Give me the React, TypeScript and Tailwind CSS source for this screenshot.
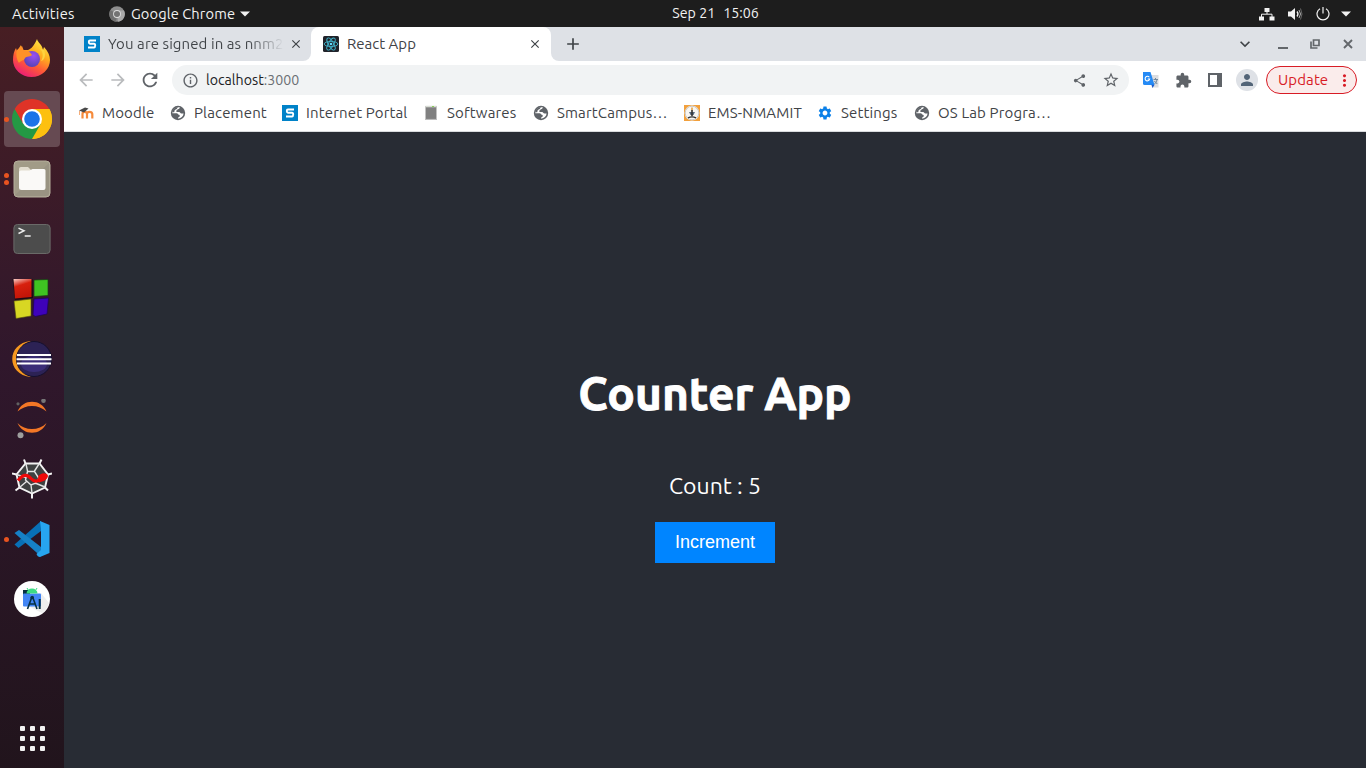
import React from "react";
import { MdArrowBack, MdArrowForward, MdRefresh, MdInfoOutline, MdShare, MdStarBorder, MdExtension, MdSettings, MdPerson, MdClose, MdAdd, MdExpandMore, MdMoreVert } from "react-icons/md";

const S = ({ vb = "0 0 40 40", w = 40, h = 40, children }: { vb?: string; w?: number; h?: number; children: React.ReactNode }) => (
  <svg viewBox={vb} width={w} height={h} className="block shrink-0">{children}</svg>
);

const Firefox = () => (
  <S>
    <defs>
      <linearGradient id="fx" x1="0.8" y1="0" x2="0.25" y2="1">
        <stop offset="0" stopColor="#fff04a" /><stop offset="0.35" stopColor="#ffae1f" /><stop offset="0.65" stopColor="#ff5a36" /><stop offset="1" stopColor="#e8177d" />
      </linearGradient>
      <radialGradient id="fxp" cx="0.6" cy="0.3" r="0.7"><stop offset="0" stopColor="#9a50f5" /><stop offset="1" stopColor="#5843b5" /></radialGradient>
    </defs>
    <path d="M25 0c1 4 5 5 6 11l1-3c4 4 6 9 6 13a18.500 17 0 0 1-37 0c0-5 1-9 3-12l1 3 4-6 1 5 6 0c3-1 6-4 9-11z" fill="url(#fx)" />
    <circle cx="20" cy="20" r="8" fill="url(#fxp)" />
    <path d="M5 11l5-4 2 5c4-1 6 1 8 4-1 2-6 1-7 3-1 3-4 2-6 5-3-5-3-9-2-13z" fill="#ff9128" />
    <path d="M27 9c4 3 5 8 2 13 4-1 5-7 3-11z" fill="#ffd33e" />
  </S>
);
const Chrome = () => (
  <S>
    <path d="M20 20L2.700 10A20 20 0 0 1 37.300 10z" fill="#df3327" />
    <path d="M20 20L37.300 10A20 20 0 0 1 20 40z" fill="#fdc00f" />
    <path d="M20 20L20 40A20 20 0 0 1 2.700 10z" fill="#249944" />
    <path d="M2.700 10L11.300 25 20 20 20 10zM20 10h17.300L20 24z" fill="#df3327" />
    <path d="M37.300 10A20 20 0 0 1 20 40l8.700-15L20 10z" fill="#fdc00f" />
    <path d="M20 40l8.700-15L20 20l-8.700 5z" fill="#249944" />
    <circle cx="20" cy="20" r="10" fill="#fff" /><circle cx="20" cy="20" r="7.800" fill="#1b73e8" />
  </S>
);
const Files = () => (
  <S>
    <rect x="2" y="2" width="36" height="36" rx="4" fill="#a19b87" stroke="#b5af9c" />
    <path d="M3 36L37 4v30a3 3 0 0 1-3 3H5z" fill="#969080" opacity=".7" />
    <path d="M7 10a2 2 0 0 1 2-2h7l3 3v7H7z" fill="#e2ddcf" />
    <path d="M7 13.500q0-2 2-2h8.500l3-1.500h11.500q1.500 0 1.500 1.500v17.500q0 2-2 2h-22q-2.500 0-2.500-2z" fill="#faf9f7" />
  </S>
);
const Terminal = () => (
  <S>
    <rect x="1.900" y="5.500" width="36.200" height="29" rx="3.500" fill="#4c4c4c" stroke="#6a6a68" />
    <path d="M6.500 9.100l5.500 2.700-5.500 2.700M12.700 17.100h6" fill="none" stroke="#eee" strokeWidth="1.500" />
  </S>
);
const Blocks = () => (
  <S>
    <defs><linearGradient id="cb" x1="0" y1="0" x2=".3" y2="1"><stop offset="0" stopColor="#f8d1cb" /><stop offset=".4" stopColor="#d7200e" /><stop offset="1" stopColor="#c31508" /></linearGradient></defs>
    <path d="M.5 0l20 0 .5 19-18 2z" fill="#1c0b12" />
    <path d="M1.500 0h18v18L3 19.500z" fill="url(#cb)" />
    <path d="M22 1l14-.5v16l-14 1z" fill="#3fc222" stroke="#163f14" strokeWidth=".7" />
    <path d="M2 22l17-2v17L4 39.500z" fill="#d8d723" stroke="#55520d" strokeWidth=".6" />
    <path d="M22 20l14.500-1L35 35l-12 2.500-2-2z" fill="#3e02ba" stroke="#1c0359" strokeWidth=".7" />
  </S>
);
const Eclipse = () => (
  <S>
    <path d="M19 2C-6 4-6 36 19 38L8 28V12z" fill="#f79820" />
    <circle cx="22" cy="20" r="17.500" fill="#2c2255" stroke="#15102d" />
    <ellipse cx="22" cy="25" rx="13" ry="8" fill="#3f3181" opacity=".8" />
    <path d="M5 16h34M4.500 20.200h35M5 24.500h34" stroke="#fff" strokeWidth="2.100" />
  </S>
);
const Jupyter = () => (
  <S>
    <path d="M5.500 12.500C11-.5 29-.5 34.500 12.500 27 5 13 5 5.500 12.500zM5.500 24C11 37 29 37 34.500 24 27 32 13 32 5.500 24z" fill="#f37726" />
    <circle cx="31.500" cy="1.800" r="2.300" fill="#767677" /><circle cx="6" cy="4.800" r="1.600" fill="#616262" /><circle cx="8.500" cy="36.300" r="3" fill="#9e9e9e" />
  </S>
);
const Spyder = () => (
  <S>
    <path d="M13.500 4.500h14l8.500 11-3 13-13 6-12.500-6-3-13z" fill="#3e4141" stroke="#f2f2f2" strokeWidth="1.900" />
    <path d="M13.500 4.500L12 .5M27.500 4.500L29.500.5M36 15.500l4-1M33 28.500l3 3M20 34v5.500M7.500 28.500l-4 3M4.500 15.500L0 14.500" stroke="#f2f2f2" strokeWidth="2" />
    <path d="M14 5l1.500 7M27 5l-4.500 7M36 15.500l-9 4M33 28l-10-4M20 34l-1-8M7.500 28.500l7-6M4.500 15.500l9 3M15.500 12.500h7l4.500 7-4 5-4 1.500-5.500-5z" fill="none" stroke="#e4e4e4" strokeWidth="1.400" />
    <path d="M6 21.500c5-6 9-7 13-2 4 4.500 8 3 11-2" fill="none" stroke="#f00909" strokeWidth="3.200" />
    <path d="M26 18c2-4 8-5 10-1.500 0 4-5 6-9 7z" fill="#f00909" />
  </S>
);
const Code = () => (
  <S>
    <path d="M2.500 25.500l4 3.500L29 12V2z" fill="#0870b6" />
    <path d="M2.500 14L7 11l22 17v9.500z" fill="#1681c6" />
    <path d="M28 2l9.500 4v28L28 38q-2.500 0-3.500-3l4.500-4V10z" fill="#27a5ef" />
  </S>
);
const Studio = () => (
  <S>
    <circle cx="20" cy="20" r="18" fill="#fff" />
    <path d="M29 14l8 10a18 18 0 0 1-7 10l-12-6z" fill="#eee" />
    <path d="M11 11h7v6h-7z" fill="#073042" /><rect x="11" y="14.500" width="18" height="13" rx="1" fill="#4285f4" />
    <path d="M14.500 14.500a5.500 5 0 0 1 11 0z" fill="#3ddc84" /><path d="M15 9l1.500 2.500M25 9l-1.500 2.500" stroke="#3ddc84" />
    <path d="M15.500 30l4-11h1.500l4 11M17.500 25h5" stroke="#073042" strokeWidth="1.600" fill="none" /><path d="M27.700 20v10" stroke="#073042" strokeWidth="2" />
    <circle cx="20.200" cy="18.500" r="1.800" fill="#073042" />
  </S>
);
const Portal = () => (
  <S vb="0 0 16 16" w={16} h={16}>
    <rect width="16" height="16" fill="#0082c8" />
    <path d="M12 4.500H6Q4.800 4.500 4.800 6T6 7.800h4q1.200 0 1.200 1.800T10 11.500H4" fill="none" stroke="#fff" strokeWidth="1.900" />
  </S>
);
const ReactLogo = () => (
  <S vb="0 0 16 16" w={16} h={16}>
    <rect width="16" height="16" rx="1.500" fill="#20232a" />
    <g fill="none" stroke="#42b3ca" strokeWidth=".9">
      <ellipse cx="8" cy="8" rx="6.800" ry="2.600" /><ellipse cx="8" cy="8" rx="6.800" ry="2.600" transform="rotate(60 8 8)" /><ellipse cx="8" cy="8" rx="6.800" ry="2.600" transform="rotate(120 8 8)" />
    </g><circle cx="8" cy="8" r="1.300" fill="#61dafb" />
  </S>
);
const Globe = () => (
  <S vb="0 0 16 16" w={16} h={16}>
    <circle cx="8" cy="8" r="7.200" fill="#5f6368" />
    <path d="M9.800 2.300c0 1.300-.7 1.700-2 1.900-.6.200-.5 1.100-1.300 1.300-.7.200-.3 1.500.6 1.500h2c1 0 1.200 1.600 2.300 1.600h2.200c-.3 2.700-2.400 4.900-5.400 5.100 0-1.400.2-1.600 1.200-2 .9-.4.3-1.700-.4-1.900-1.200-.2-1-1.500-2.300-1.500H2.300C2.300 4.800 5.500 1.600 9.800 2.300z" fill="#fff" />
    <path d="M2.200 7.200C2.300 4.500 5 2.200 7.800 2.200L6.800 4 4.800 5l-.6 2.200z" fill="#5f6368" />
  </S>
);
const Moodle = () => (
  <S vb="0 0 16 16" w={16} h={16}>
    <path d="M4.500 13.500V9q0-2.200 2.200-2.200T9 9v4.500M9 9q0-2.200 2.500-2.200T14.300 9v4.500" fill="none" stroke="#f68b3c" strokeWidth="2.200" />
    <path d="M1 5.500l6-3 3.500 1-4.500 4z" fill="#494949" /><path d="M1.500 6v4" stroke="#f6ad78" />
  </S>
);
const Server = () => (
  <S vb="0 0 16 16" w={16} h={16}>
    <rect x="2.500" y="1" width="11" height="14" fill="#858585" /><path d="M2.500 1.500h11" stroke="#d8dcd5" strokeWidth="1.500" /><path d="M9 1.500h2" stroke="#8ad05a" />
    <path d="M3 4h10M3 6h10M3 8h10M3 10h10M3 12h10" stroke="#757575" strokeWidth=".6" /><path d="M2.500 14.500h11" stroke="#bbb" />
  </S>
);
const Ems = () => (
  <S vb="0 0 16 16" w={16} h={16}>
    <rect width="16" height="16" fill="#f2a03c" /><circle cx="8" cy="8" r="7.400" fill="#f8f6f2" /><circle cx="8" cy="8" r="6.800" fill="none" stroke="#b5b3b0" strokeWidth=".7" />
    <path d="M8 2.500v3" stroke="#e39a35" strokeWidth="1.500" /><path d="M5 7h6l-1.500 3h-3z" fill="#596b80" /><path d="M7.200 5h1.600v6H7.200z" fill="#333" /><path d="M4 12.800q4-2 8 0" fill="none" stroke="#333" strokeWidth="1.300" />
  </S>
);
const Translate = () => (
  <S vb="0 0 16 16" w={16} h={16}>
    <path d="M6 3h9.500v12.500H9z" fill="#dcdde0" /><path d="M0 0h7.500l4 13H1.500Q0 13 0 11.500z" fill="#258af5" /><path d="M8.500 12.800h3L9.500 16z" fill="#1b59c9" />
    <path d="M6.300 5.200a2.300 2.300 0 1 0 .4 1.800H4.700" fill="none" stroke="#fff" strokeWidth="1.100" /><path d="M10.500 7.500H15M12.500 6v1.500M14 8q-1 3-2.500 4M11.300 9l3 3" stroke="#70889e" fill="none" />
  </S>
);

const apps = [
  { id: "firefox", icon: <Firefox />, dots: 0 },
  { id: "chrome", icon: <Chrome />, dots: 1 },
  { id: "files", icon: <Files />, dots: 2 },
  { id: "terminal", icon: <Terminal />, dots: 0 },
  { id: "blocks", icon: <Blocks />, dots: 0 },
  { id: "eclipse", icon: <Eclipse />, dots: 0 },
  { id: "jupyter", icon: <Jupyter />, dots: 0 },
  { id: "spyder", icon: <Spyder />, dots: 0 },
  { id: "code", icon: <Code />, dots: 1 },
  { id: "studio", icon: <Studio />, dots: 0 },
];

const bookmarks = [
  { text: "Moodle", icon: <Moodle />, w: "w-[92px]" },
  { text: "Placement", icon: <Globe />, w: "w-[112px]" },
  { text: "Internet Portal", icon: <Portal />, w: "w-[141px]" },
  { text: "Softwares", icon: <Server />, w: "w-[110px]" },
  { text: "SmartCampus…", icon: <Globe />, w: "w-[151px]" },
  { text: "EMS-NMAMIT", icon: <Ems />, w: "w-[133px]" },
  { text: "Settings", icon: <MdSettings size={16} color="#0b80e8" />, w: "w-[97px]" },
  { text: "OS Lab Progra…", icon: <Globe />, w: "w-[140px]" },
];

const TopBar = () => (
  <header className="grid h-[27px] shrink-0 grid-cols-[1fr_auto_1fr] items-center bg-[#1d1d1d] text-[14.670px] leading-[27px] text-[#f2f2f2]">
    <div className="flex items-center pl-3">
      <span className="w-[97px] tracking-[0.25px]">Activities</span>
      <S vb="0 0 16 16" w={16} h={16}>
        <circle cx="8" cy="8" r="7.800" fill="#8d8d8d" /><path d="M8 8L1.500 4A7.800 7.800 0 0 0 7 15.800z" fill="#707070" /><path d="M8 4.500h7A7.800 7.800 0 0 1 9 15.800z" fill="#aaa" />
        <circle cx="8" cy="8" r="3.900" fill="#ddd" /><circle cx="8" cy="8" r="3" fill="#737373" />
      </S>
      <span className="ml-[6px] w-[109px] tracking-[0.1px]">Google Chrome</span>
      <S vb="0 0 10 6" w={10} h={6}><path d="M0 .5h10L5 5.500z" fill="#f2f2f2" /></S>
    </div>
    <div className="ml-[65px] flex gap-2 text-[14.200px]"><span>Sep 21</span><span>15:06</span></div>
    <div className="flex items-center justify-end pr-[15px]">
      <S vb="0 0 16 14" w={16} h={14}><path d="M5.500 1h5v4h-5zM0 9.500h5v4H0zM10.500 9.500h5v4h-5z" fill="#f2f2f2" /><path d="M8 4v3M2.500 10V7.200h10.500V10" fill="none" stroke="#f2f2f2" /></S>
      <span className="w-[13px]" />
      <S vb="0 0 16 14" w={16} h={14}><path d="M0 4.500h3L7 1v12L3 9.500H0z" fill="#f2f2f2" /><path d="M9 4.500q2 2.500 0 5" fill="none" stroke="#f2f2f2" strokeWidth="1.300" /><path d="M11 3q3 4 0 8" fill="none" stroke="#b8b8b8" /><path d="M12.500 1.500q3 5.500 0 11" fill="none" stroke="#686868" /></S>
      <span className="w-[12px]" />
      <S vb="0 0 14 14" w={14} h={14}><path d="M4 1.700a6 6 0 1 0 6 0M7 0v6.500" fill="none" stroke="#f2f2f2" strokeWidth="1.200" /></S>
      <span className="w-[11px]" />
      <S vb="0 0 10 6" w={10} h={6}><path d="M0 .5h10L5 5.500z" fill="#f2f2f2" /></S>
    </div>
  </header>
);

const Dock = () => (
  <nav className="flex w-16 shrink-0 flex-col gap-1 bg-linear-to-b from-[#471e23] via-[#30172c] via-45% to-[#21141c] px-1 pt-1">
    {apps.map((a) => (
      <div key={a.id} className={`relative flex h-14 shrink-0 items-center justify-center rounded ${a.id === "chrome" ? "bg-[#664a52]" : ""}`}>
        {a.icon}
        <div className="absolute inset-y-0 left-0 flex flex-col justify-center gap-[2.500px]">
          {Array.from({ length: a.dots }, (_, i) => <span key={i} className="size-[5px] rounded-full bg-[#e95420]" />)}
        </div>
      </div>
    ))}
    <div className="mx-auto mt-auto mb-[17px] grid grid-cols-3 gap-[5px]">
      {Array.from({ length: 9 }, (_, i) => <span key={i} className="size-[5px] rounded-[1px] bg-[#f2f2f2]" />)}
    </div>
  </nav>
);

const TabStrip = () => (
  <div className="flex h-[34px] shrink-0 bg-white text-[#3f4347]">
    <div className="flex w-[247px] items-center rounded-br-lg bg-[#dee1e6] pl-5">
      <Portal />
      <span className="ml-2 w-[176px] overflow-hidden whitespace-nowrap bg-linear-to-r from-[#3f4347] from-80% to-transparent bg-clip-text text-[15px] tracking-[0.08px] text-transparent">You are signed in as nnm22</span>
      <MdClose size={14} className="ml-[5px]" />
    </div>
    <div className="flex w-60 bg-[#dee1e6]">
      <div className="flex flex-1 items-center rounded-t-lg bg-white pl-3">
        <ReactLogo />
        <span className="ml-2 flex-1 text-[15px]">React App</span>
        <MdClose size={14} className="mr-[9px]" />
      </div>
    </div>
    <div className="flex flex-1 items-center rounded-bl-lg bg-[#dee1e6] pr-[12px] pl-3">
      <MdAdd size={20} />
      <MdExpandMore size={20} className="ml-auto" />
      <span className="mt-[8px] ml-[23px] h-[2px] w-[10px] bg-[#63676b]" />
      <span className="w-[22px]" />
      <S vb="0 0 10 10" w={10} h={10}><path d="M3.500 1h5.500v5.500H3.500zM1 2.500V9h6.500" fill="none" stroke="#63676b" strokeWidth="1.700" /></S>
      <span className="w-[22px]" />
      <S vb="0 0 12 12" w={12} h={12}><path d="M2 2l8 8M10 2l-8 8" stroke="#63676b" strokeWidth="1.900" /></S>
    </div>
  </div>
);

const Toolbar = () => (
  <div className="flex h-[38px] shrink-0 items-center bg-white pr-[9px] pl-3 text-[#5f6368]">
    <MdArrowBack size={20} color="#b9bbbd" /><MdArrowForward size={20} color="#b9bbbd" className="ml-3" /><MdRefresh size={22} className="ml-[11px]" />
    <div className="ml-[11px] flex h-[30px] w-[957px] items-center rounded-full bg-[#f1f3f4] pr-[9px] pl-[10px]">
      <MdInfoOutline size={17} />
      <span className="ml-[7px] flex-1 pt-px text-[14.200px] text-[#202124]">localhost<span className="text-[#6b6f73]">:3000</span></span>
      <MdShare size={15} /><MdStarBorder size={18} className="ml-[15px]" />
    </div>
    <span className="w-[14px]" /><Translate />
    <MdExtension size={17} className="ml-[16px]" />
    <span className="w-[16px]" />
    <S vb="0 0 14 14" w={14} h={14}><path d="M1 1h12v12H1z" fill="none" stroke="#5f6368" strokeWidth="2" /><path d="M9 0h5v14H9z" fill="#5f6368" /></S>
    <span className="ml-[14px] flex size-[22px] items-center justify-center rounded-full bg-[#dee1e6]"><MdPerson size={18} color="#526477" /></span>
    <div className="ml-auto flex h-7 w-[91px] items-center rounded-full border border-[#d81b25] bg-[#faeceb] pl-[11px] text-[15px] tracking-[0.1px] text-[#d81b25]">
      <span className="w-[57px]">Update</span><MdMoreVert size={19} />
    </div>
  </div>
);

export default function App() {
  const [count, setCount] = React.useState(5);
  return (
    <div className="flex h-screen w-full flex-col overflow-hidden font-['Ubuntu','Noto_Sans',sans-serif]">
      <TopBar />
      <div className="flex min-h-0 flex-1">
        <Dock />
        <div className="flex min-w-0 flex-1 flex-col">
          <TabStrip />
          <Toolbar />
          <div className="flex h-[33px] shrink-0 items-center border-b border-[#d9dbde] bg-white pb-[4px] pl-[14px] text-[15px] tracking-[0.15px] text-[#3f4347]">
            {bookmarks.map((b) => (
              <div key={b.text} className={`flex shrink-0 items-center gap-2 whitespace-nowrap ${b.w}`}>{b.icon}<span>{b.text}</span></div>
            ))}
          </div>
          <main className="flex flex-1 flex-col items-center bg-[#282c34] pt-[227px] text-white">
            <h1 className="h-[68px] text-[46px] leading-[68px] font-bold [-webkit-text-stroke:0.9px_white]">Counter App</h1>
            <p className="mt-[43px] h-8 text-[23px] leading-8">Count : {count}</p>
            <button onClick={() => setCount(count + 1)} className="mt-5 h-[41px] w-[120px] bg-[#0085ff] font-['Liberation_Sans',sans-serif] text-[18px]">Increment</button>
          </main>
        </div>
      </div>
    </div>
  );
}
